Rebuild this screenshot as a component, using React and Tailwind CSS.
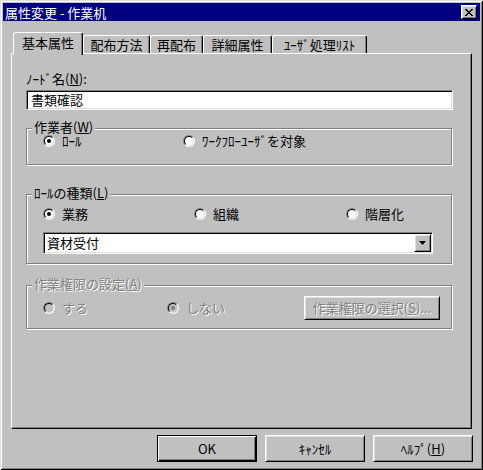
import React from "react";

const raised =
  "border border-t-white border-l-white border-r-black border-b-black shadow-[inset_1px_1px_0_#dfdfdf,inset_-1px_-1px_0_#808080]";
const sunken =
  "border border-t-[#808080] border-l-[#808080] border-r-white border-b-white shadow-[inset_1px_1px_0_#000,inset_-1px_-1px_0_#dfdfdf]";
const etched =
  "border border-[#808080] shadow-[inset_1px_1px_0_#fff,1px_1px_0_#fff]";
const disabledText = "text-[#808080] [text-shadow:1px_1px_0_#fff]";

const Radio = ({ checked, disabled }) => (
  <span className="w-[12px] h-[12px] rounded-full border border-t-[#808080] border-l-[#808080] border-r-white border-b-white flex shrink-0">
    <span
      className={`flex-1 rounded-full border border-t-black border-l-black border-r-[#dfdfdf] border-b-[#dfdfdf] flex items-center justify-center ${
        disabled ? "bg-[#c0c0c0]" : "bg-white"
      }`}
    >
      {checked && (
        <span
          className={`w-[4px] h-[4px] rounded-full ${
            disabled ? "bg-[#808080]" : "bg-black"
          }`}
        />
      )}
    </span>
  </span>
);

const Option = ({ label, checked, disabled, className = "" }) => (
  <div className={`flex items-center gap-[7px] ${className}`}>
    <Radio checked={checked} disabled={disabled} />
    <span className={`leading-[14px] ${disabled ? disabledText : ""}`}>{label}</span>
  </div>
);

const GroupLabel = ({ children, disabled }) => (
  <div
    className={`self-start -mt-[9px] ml-[5px] px-[2px] bg-[#c0c0c0] leading-[14px] ${
      disabled ? disabledText : ""
    }`}
  >
    {children}
  </div>
);

const tabs = [
  { name: "配布方法", w: "w-[67px]" },
  { name: "再配布", w: "w-[53px]" },
  { name: "詳細属性", w: "w-[69px]" },
  { name: "ﾕｰｻﾞ処理ﾘｽﾄ", w: "w-[95px]" },
];

export default function App() {
  return (
    <div className="w-[483px] h-[470px] bg-[#c0c0c0] flex flex-col p-[3px] text-[13px] text-black [font-family:'Noto_Sans_CJK_JP','Liberation_Sans',sans-serif] shadow-[inset_1px_1px_0_#dfdfdf,inset_-1px_-1px_0_#000,inset_2px_2px_0_#fff,inset_-2px_-2px_0_#808080]">
      {/* title bar */}
      <div className="h-[18px] bg-[#000080] flex items-center justify-between pl-[2px] pr-[3px]">
        <span className="text-white leading-none">属性変更 - 作業机</span>
        <div className={`w-[16px] h-[14px] bg-[#c0c0c0] flex items-center justify-center ${raised}`}>
          <svg width="8" height="7" viewBox="0 0 8 7">
            <path d="M0 0h2v1h1v1h2v-1h1v-1h2v1h-1v1h-1v1h-1v1h1v1h1v1h1v1h-2v-1h-1v-1h-2v1h-1v1h-2v-1h1v-1h1v-1h1v-1h-1v-1h-1v-1h-1z" fill="#000" />
          </svg>
        </div>
      </div>

      <div className="mx-[8px] flex flex-col">
        {/* tabs */}
        <div className="mt-[11px] h-[21px] flex items-end relative z-10">
          <div className="ml-[2px] w-[70px] h-[23px] -mb-[2px] bg-[#c0c0c0] border-l border-t border-r border-white border-r-black rounded-t-[3px] shadow-[inset_-1px_0_0_#808080] flex items-center justify-center pb-[3px]">
            基本属性
          </div>
          {tabs.map((t) => (
            <div
              key={t.name}
              className={`${t.w} h-[18px] border-l border-t border-r border-white border-r-black rounded-t-[3px] shadow-[inset_-1px_0_0_#808080] flex items-center justify-center`}
            >
              {t.name}
            </div>
          ))}
        </div>

        {/* panel */}
        <div className="h-[376px] border border-t-white border-l-white border-r-black border-b-black shadow-[inset_-1px_-1px_0_#808080] flex flex-col pt-[18px] pl-[14px]">
          <div className="leading-[14px]">
            ﾉｰﾄﾞ名(<span className="underline">N</span>):
          </div>
          <div className={`mt-[4px] w-[427px] h-[20px] bg-white flex items-center pl-[4px] ${sunken}`}>
            書類確認
          </div>

          {/* 作業者 */}
          <div className={`mt-[18px] w-[426px] h-[37px] flex flex-col ${etched}`}>
            <GroupLabel>
              作業者(<span className="underline">W</span>)
            </GroupLabel>
            <div className="flex items-center pl-[16px]">
              <Option label="ﾛｰﾙ" checked className="w-[140px]" />
              <Option label="ﾜｰｸﾌﾛｰﾕｰｻﾞを対象" />
            </div>
          </div>

          {/* ロールの種類 */}
          <div className={`mt-[29px] w-[426px] h-[70px] flex flex-col ${etched}`}>
            <GroupLabel>
              ﾛｰﾙの種類(<span className="underline">L</span>)
            </GroupLabel>
            <div className="mt-[7px] flex items-center pl-[16px]">
              <Option label="業務" checked className="w-[151px]" />
              <Option label="組織" className="w-[152px]" />
              <Option label="階層化" />
            </div>
            <div className={`mt-[11px] ml-[16px] w-[390px] h-[22px] bg-white flex items-center justify-between pl-[3px] pr-[1px] ${sunken}`}>
              <span>資材受付</span>
              <div className={`w-[17px] h-[18px] bg-[#c0c0c0] flex items-center justify-center ${raised}`}>
                <svg width="7" height="4" viewBox="0 0 7 4">
                  <path d="M0 0h7L3.5 4z" fill="#000" />
                </svg>
              </div>
            </div>
          </div>

          {/* 作業権限の設定 */}
          <div className={`mt-[21px] w-[426px] h-[44px] flex flex-col ${etched}`}>
            <GroupLabel disabled>
              作業権限の設定(<span className="underline">A</span>)
            </GroupLabel>
            <div className="mt-[5px] flex items-center pl-[16px]">
              <Option label="する" disabled className="w-[124px]" />
              <Option label="しない" checked disabled className="w-[137px]" />
              <div className={`w-[136px] h-[24px] flex items-center justify-center ${raised} ${disabledText}`}>
                作業権限の選択(<span className="underline">S</span>)...
              </div>
            </div>
          </div>
        </div>
      </div>

      {/* buttons */}
      <div className="mt-[6px] flex justify-end gap-[8px] pr-[7px]">
        <div className="w-[100px] h-[27px] border border-black shadow-[inset_1px_1px_0_#fff,inset_-1px_-1px_0_#000,inset_-2px_-2px_0_#808080] flex items-center justify-center">
          OK
        </div>
        <div className={`w-[100px] h-[27px] flex items-center justify-center ${raised}`}>ｷｬﾝｾﾙ</div>
        <div className={`w-[100px] h-[27px] flex items-center justify-center ${raised}`}>
          ﾍﾙﾌﾟ(<span className="underline">H</span>)
        </div>
      </div>
    </div>
  );
}
